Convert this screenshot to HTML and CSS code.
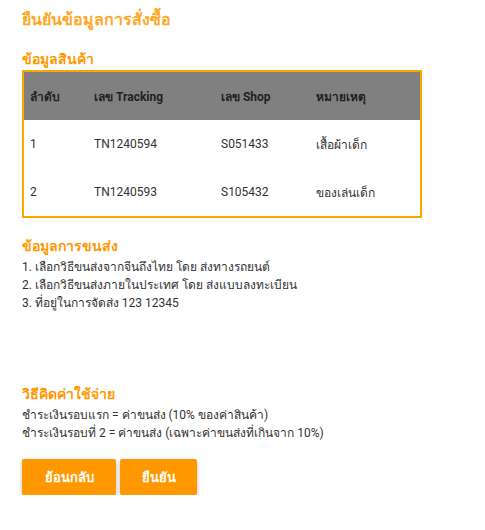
FILE: index.html
```html
<!DOCTYPE html>
<html lang="th">
<head>
<meta charset="utf-8">
<link rel="stylesheet" href="styles.css">
</head>
<body>
<div class="page">
  <h1 class="title">ยืนยันข้อมูลการสั่งซื้อ</h1>
  <h2 class="section-title first">ข้อมูลสินค้า</h2>
  <div class="table-box">
    <table class="items">
      <thead>
        <tr><th class="c1">ลำดับ</th><th class="c2">เลข Tracking</th><th class="c3">เลข Shop</th><th class="c4">หมายเหตุ</th></tr>
      </thead>
      <tbody>
        <tr><td>1</td><td>TN1240594</td><td>S051433</td><td>เสื้อผ้าเด็ก</td></tr>
        <tr><td>2</td><td>TN1240593</td><td>S105432</td><td>ของเล่นเด็ก</td></tr>
      </tbody>
    </table>
  </div>
  <h2 class="section-title ship">ข้อมูลการขนส่ง</h2>
  <div class="lines">
    <p>1. เลือกวิธีขนส่งจากจีนถึงไทย โดย ส่งทางรถยนต์</p>
    <p>2. เลือกวิธีขนส่งภายในประเทศ โดย ส่งแบบลงทะเบียน</p>
    <p>3. ที่อยู่ในการจัดส่ง 123 12345</p>
  </div>
  <h2 class="section-title cost">วิธีคิดค่าใช้จ่าย</h2>
  <div class="lines">
    <p>ชำระเงินรอบแรก = ค่าขนส่ง (10% ของค่าสินค้า)</p>
    <p>ชำระเงินรอบที่ 2 = ค่าขนส่ง (เฉพาะค่าขนส่งที่เกินจาก 10%)</p>
  </div>
  <div class="actions">
    <button class="btn back">ย้อนกลับ</button>
    <button class="btn ok">ยืนยัน</button>
  </div>
</div>
</body>
</html>
```

FILE: styles.css
```css
html, body {
  margin: 0;
  padding: 0;
  background: #fff;
}
body {
  font-family: Roboto, "Noto Sans", "DejaVu Sans", sans-serif;
  color: #333;
}
.page {
  padding: 10px 22px 0 22px;
  width: 400px;
}
.title {
  margin: 0;
  font-size: 16px;
  line-height: 20px;
  font-weight: bold;
  color: #FFA726;
}
.section-title {
  margin: 0;
  font-size: 14px;
  line-height: 18px;
  font-weight: bold;
  color: #FF9800;
}
.section-title.first {
  margin-top: 20px;
}
.table-box {
  border: 2px solid #FFA500;
  width: 396px;
  margin-top: 2px;
}
.items {
  width: 100%;
  border-collapse: collapse;
  font-size: 12px;
}
.items th {
  background: #808080;
  color: #222;
  text-align: left;
  font-weight: bold;
  height: 48px;
  padding: 0 0 0 6px;
}
.items td {
  height: 48px;
  padding: 0 0 0 6px;
  color: #333;
}
.items .c1 { width: 58px; }
.items .c2 { width: 121px; }
.items .c3 { width: 89px; }
.section-title.ship {
  margin-top: 19px;
  margin-bottom: 3px;
}
.section-title.cost {
  margin-top: 73px;
  margin-bottom: 3px;
}
.lines p {
  margin: 0;
  font-size: 12px;
  line-height: 18px;
  color: #333;
}
.actions {
  display: flex;
  gap: 4px;
  margin-top: 17px;
}
.btn {
  border: none;
  border-radius: 2px;
  background: #FF9800;
  color: #fff;
  font-family: inherit;
  font-weight: bold;
  font-size: 13px;
  height: 36px;
  padding: 0;
  box-shadow: 0 2px 4px rgba(0,0,0,0.25);
}
.btn.back { width: 94px; }
.btn.ok { width: 77px; }
```
